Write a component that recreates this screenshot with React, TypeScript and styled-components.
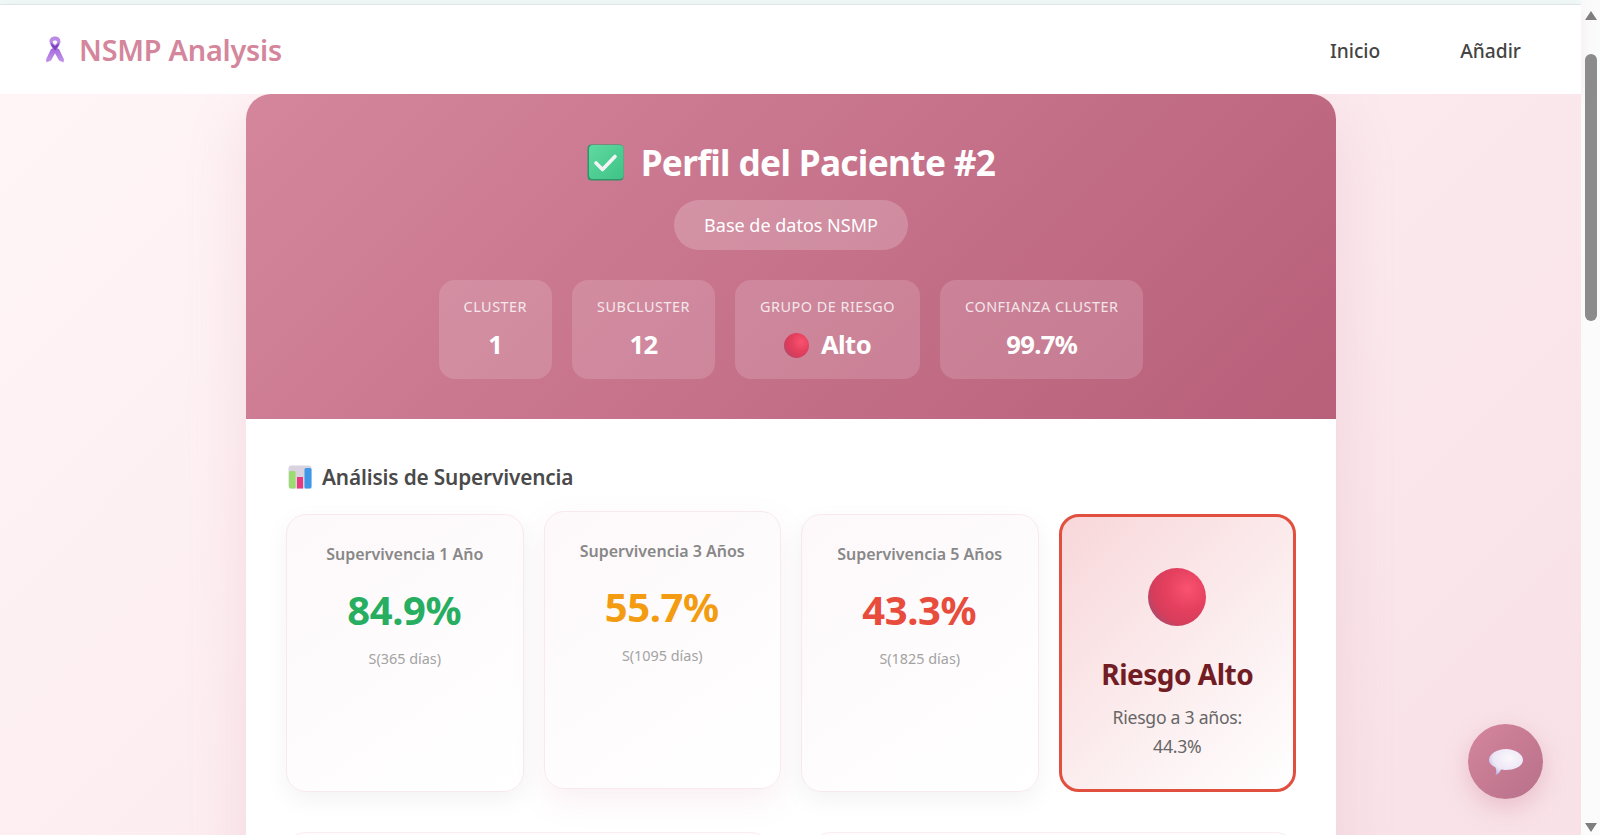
import React from 'react'
import styled, { createGlobalStyle } from 'styled-components'

const GlobalStyle = createGlobalStyle`
  html, body {
    margin: 0;
    padding: 0;
    height: 100%;
    overflow: hidden;
    background: #fff;
    font-family: 'Noto Sans', 'Open Sans', sans-serif;
  }
  * {
    box-sizing: border-box;
  }
`

const Screen = styled.div`
  display: flex;
  width: 100%;
  height: 835px;
  overflow: hidden;
`

const Viewport = styled.div`
  flex: 1;
  min-width: 0;
  display: flex;
  flex-direction: column;
  position: relative;
`

const TopStrip = styled.div`
  height: 5px;
  flex: none;
  background: #effaf7;
  border-bottom: 1px solid #dfeaea;
`

const Nav = styled.nav`
  flex: none;
  height: 89px;
  padding: 2px 60px 0 46px;
  display: flex;
  align-items: center;
  justify-content: space-between;
  background: #fff;
  box-shadow: 0 2px 16px rgba(212, 134, 156, 0.12);
`

const Brand = styled.div`
  display: flex;
  align-items: center;
  gap: 15px;
  margin-bottom: 2px;
  color: #d4869c;
  font-size: 28.8px;
  font-weight: 600;
  letter-spacing: -0.2px;
`

const NavLinks = styled.div`
  display: flex;
  gap: 80px;
`

const NavLink = styled.a`
  color: #444;
  font-size: 19.2px;
  font-weight: 500;
`

const Main = styled.main`
  flex: 1;
  min-height: 0;
  overflow: hidden;
  padding-left: 1px;
  background: linear-gradient(135deg, #fff5f7 0%, #f8e1e7 100%);
`

const Sheet = styled.div`
  width: 1090px;
  margin: 0 auto;
  background: #fff;
  border-radius: 25px 25px 0 0;
  box-shadow: 0 20px 60px rgba(212, 134, 156, 0.2);
`

const Hero = styled.header`
  height: 325px;
  padding-top: 46px;
  border-radius: 25px 25px 0 0;
  background: linear-gradient(135deg, #d4869c 0%, #b85f7a 100%);
  color: #fff;
  display: flex;
  flex-direction: column;
  align-items: center;
`

const Title = styled.h1`
  margin: 0;
  display: flex;
  align-items: center;
  gap: 17px;
  font-size: 35.2px;
  line-height: 44px;
  font-weight: 700;
  letter-spacing: -0.65px;
`

const SourcePill = styled.div`
  margin-top: 16px;
  padding: 0 30px;
  height: 50px;
  display: flex;
  align-items: center;
  border-radius: 25px;
  background: rgba(255, 255, 255, 0.2);
  font-size: 18px;
`

const StatRow = styled.div`
  margin-top: 30px;
  display: flex;
  gap: 20px;
`

const StatTile = styled.div`
  height: 99px;
  padding: 17px 25px 0;
  border-radius: 16px;
  background: rgba(255, 255, 255, 0.15);
  text-align: center;
`

const StatLabel = styled.div`
  font-size: 14.4px;
  line-height: 20px;
  letter-spacing: 0.52px;
  text-transform: uppercase;
  opacity: 0.8;
`

const StatValue = styled.div`
  margin-top: 10px;
  display: flex;
  align-items: center;
  justify-content: center;
  gap: 12px;
  font-size: 25.6px;
  line-height: 36px;
  font-weight: 700;
  letter-spacing: -0.6px;
`

const Body = styled.section`
  padding: 40px 40px 0;
`

const SectionTitle = styled.h2`
  margin: 0 0 20px;
  padding-left: 2px;
  display: flex;
  align-items: center;
  gap: 10px;
  height: 35px;
  color: #4a4a4a;
  font-size: 20.8px;
  font-weight: 600;
  letter-spacing: -0.15px;
`

const CardGrid = styled.div`
  display: grid;
  grid-template-columns: repeat(4, 1fr);
  gap: 20px;
`

const SurvivalCard = styled.div<{ $lifted?: boolean }>`
  height: 278px;
  padding: 28px 16px 0;
  border-radius: 20px;
  border: 1px solid #f8e9ed;
  background: linear-gradient(145deg, #fdf8fa 0%, #ffffff 100%);
  box-shadow: ${(p) =>
    p.$lifted ? '0 12px 30px rgba(212, 134, 156, 0.12)' : '0 8px 25px rgba(0, 0, 0, 0.05)'};
  transform: ${(p) => (p.$lifted ? 'translateY(-3px)' : 'none')};
  text-align: center;
`

const CardLabel = styled.div`
  color: #888;
  font-size: 16px;
  line-height: 22px;
  font-weight: 600;
`

const CardValue = styled.div<{ $color: string }>`
  margin-top: 17px;
  padding-right: 1px;
  color: ${(p) => p.$color};
  font-size: 40px;
  line-height: 56px;
  font-weight: 700;
  letter-spacing: -0.4px;
`

const CardNote = styled.div`
  margin-top: 11px;
  color: #a3a3a3;
  font-size: 14.4px;
  line-height: 20px;
`

const RiskCard = styled.div`
  height: 278px;
  padding-top: 51px;
  border-radius: 20px;
  border: 3px solid #e14f3f;
  background: linear-gradient(135deg, #f8d7da 0%, #ffffff 100%);
  display: flex;
  flex-direction: column;
  align-items: center;
  text-align: center;
`

const RiskTitle = styled.div`
  margin-top: 28px;
  color: #721c24;
  font-size: 28px;
  line-height: 40px;
  font-weight: 700;
  letter-spacing: -0.5px;
`

const RiskNote = styled.div`
  margin-top: 9px;
  color: #666;
  font-size: 17.6px;
  line-height: 29px;
  letter-spacing: -0.25px;
`

const LowerGrid = styled.div`
  margin-top: 40px;
  display: grid;
  grid-template-columns: 1fr 1fr;
  gap: 40px;
`

const LowerCard = styled.div`
  height: 300px;
  border-radius: 20px;
  border: 1px solid #f8eef1;
  background: #fffcfd;
`

const ChatButton = styled.button`
  position: absolute;
  left: 1468px;
  top: 724px;
  width: 75px;
  height: 75px;
  padding: 0;
  border: none;
  border-radius: 50%;
  background: linear-gradient(135deg, #d4869c 0%, #b8708a 100%);
  box-shadow: 0 8px 25px rgba(212, 134, 156, 0.4);
  display: flex;
  align-items: center;
  justify-content: center;
`

const Scrollbar = styled.div`
  flex: none;
  width: 19px;
  height: 100%;
  padding: 11px 3px 3px 0;
  background: #fbfbfb;
  display: flex;
  flex-direction: column;
  align-items: flex-end;
`

const ScrollThumb = styled.div`
  width: 12px;
  height: 267px;
  margin-top: 34px;
  border-radius: 6px;
  background: #8c8c8c;
`

const ScrollSpacer = styled.div`
  flex: 1;
`

const ScrollArrow = styled.div<{ $down?: boolean }>`
  width: 0;
  height: 0;
  border-left: 6px solid transparent;
  border-right: 6px solid transparent;
  ${(p) => (p.$down ? 'border-top: 9px solid #7f7f7f;' : 'border-bottom: 9px solid #7f7f7f;')}
`

const RibbonIcon = () => (
  <svg width="18" height="27" viewBox="1 0 18 27">
    <defs>
      <linearGradient id="ribbonTail" x1="0" y1="0" x2="0" y2="1">
        <stop offset="0" stopColor="#a468de" />
        <stop offset="1" stopColor="#c596ea" />
      </linearGradient>
    </defs>
    <path d="M6 13 L1 23.5 L1.5 26.5 L6 24.5 L13 12 Z" fill="url(#ribbonTail)" />
    <path d="M14 13 L19 23.5 L18.5 26.5 L14 24.5 L7 12 Z" fill="url(#ribbonTail)" />
    <path
      d="M10 0.5 C6.5 0.5 4.5 2.8 4.5 5.5 C4.5 8 6.5 10 7.5 12 L10 9.5 L12.5 12 C13.5 10 15.5 8 15.5 5.5 C15.5 2.8 13.5 0.5 10 0.5 Z M10 4.5 C11.5 4.5 12.2 5.2 12.2 6 C12.2 7 11 8 10 8.8 C9 8 7.8 7 7.8 6 C7.8 5.2 8.5 4.5 10 4.5 Z"
      fill="#b98ae6"
      fillRule="evenodd"
    />
    <path d="M6 6.5 C7 8 8.5 9 10 10 C11.5 9 13 8 14 6.5 L13.5 10 L10 14.5 L6.5 10 Z" fill="#7f42bf" />
  </svg>
)

const CheckIcon = () => (
  <svg width="37" height="37" viewBox="0 0 37 37">
    <defs>
      <linearGradient id="checkFill" x1="0" y1="0" x2="1" y2="1">
        <stop offset="0" stopColor="#5fd9a0" />
        <stop offset="1" stopColor="#3fc386" />
      </linearGradient>
    </defs>
    <rect x="0.5" y="0.5" width="36" height="36" rx="4" fill="#2f9468" />
    <rect x="2" y="1" width="34.5" height="34" rx="4" fill="url(#checkFill)" />
    <path
      d="M9 19 L15.5 25.5 L28 12.5"
      fill="none"
      stroke="#f4f4f6"
      strokeWidth="3.6"
      strokeLinecap="round"
      strokeLinejoin="round"
    />
  </svg>
)

const ChartIcon = () => (
  <svg width="24" height="24" viewBox="0 0 24 24">
    <rect x="0.5" y="0.5" width="23" height="23" rx="3" fill="#d8d3de" />
    <rect x="1" y="6" width="6.5" height="17.5" rx="1.5" fill="#9bdc6e" />
    <rect x="9" y="12" width="6" height="11.5" fill="#e8397f" />
    <rect x="16.5" y="3" width="7" height="20.5" rx="1.5" fill="#3f97e8" />
  </svg>
)

const Ball = ({ size }: { size: number }) => (
  <svg width={size} height={size} viewBox="0 0 60 60">
    <defs>
      <radialGradient id="ballFill" cx="0.68" cy="0.36" r="0.74">
        <stop offset="0" stopColor="#fa5271" />
        <stop offset="0.5" stopColor="#e4405e" />
        <stop offset="0.82" stopColor="#d63d5b" />
        <stop offset="1" stopColor="#ad4a6c" />
      </radialGradient>
    </defs>
    <circle cx="30" cy="30" r="30" fill="url(#ballFill)" />
  </svg>
)

const BubbleIcon = () => (
  <svg width="36" height="30" viewBox="0 0 36 30">
    <defs>
      <radialGradient id="bubbleFill" cx="0.6" cy="0.35" r="0.8">
        <stop offset="0" stopColor="#fbf8fc" />
        <stop offset="0.6" stopColor="#ece6f6" />
        <stop offset="1" stopColor="#a9a4e6" />
      </radialGradient>
    </defs>
    <path
      d="M18 2 C27 2 35 7 35 13 C35 19 27 23 18 23 C16 23 14 22.8 13 22.5 C12 25 10 27.5 7.5 28 C8.5 26 8.5 23 7.5 20.5 C3.5 18.5 1 16 1 13 C1 7 9 2 18 2 Z"
      fill="url(#bubbleFill)"
    />
  </svg>
)

const stats = [
  { label: 'Cluster', value: '1' },
  { label: 'Subcluster', value: '12' },
  { label: 'Grupo de riesgo', value: 'Alto', ball: true },
  { label: 'Confianza cluster', value: '99.7%' },
]

const survival = [
  { label: 'Supervivencia 1 Año', value: '84.9%', note: 'S(365 días)', color: '#27ae60' },
  { label: 'Supervivencia 3 Años', value: '55.7%', note: 'S(1095 días)', color: '#f39c12', lifted: true },
  { label: 'Supervivencia 5 Años', value: '43.3%', note: 'S(1825 días)', color: '#e74c3c' },
]

export default function App() {
  return (
    <Screen>
      <GlobalStyle />
      <Viewport>
        <TopStrip />
        <Nav>
          <Brand>
            <RibbonIcon />
            NSMP Analysis
          </Brand>
          <NavLinks>
            <NavLink>Inicio</NavLink>
            <NavLink>Añadir</NavLink>
          </NavLinks>
        </Nav>
        <Main>
          <Sheet>
            <Hero>
              <Title>
                <CheckIcon />
                Perfil del Paciente #2
              </Title>
              <SourcePill>Base de datos NSMP</SourcePill>
              <StatRow>
                {stats.map((s) => (
                  <StatTile key={s.label}>
                    <StatLabel>{s.label}</StatLabel>
                    <StatValue>
                      {s.ball && <Ball size={25} />}
                      {s.value}
                    </StatValue>
                  </StatTile>
                ))}
              </StatRow>
            </Hero>
            <Body>
              <SectionTitle>
                <ChartIcon />
                Análisis de Supervivencia
              </SectionTitle>
              <CardGrid>
                {survival.map((c) => (
                  <SurvivalCard key={c.label} $lifted={c.lifted}>
                    <CardLabel>{c.label}</CardLabel>
                    <CardValue $color={c.color}>{c.value}</CardValue>
                    <CardNote>{c.note}</CardNote>
                  </SurvivalCard>
                ))}
                <RiskCard>
                  <Ball size={58} />
                  <RiskTitle>Riesgo Alto</RiskTitle>
                  <RiskNote>
                    Riesgo a 3 años:
                    <br />
                    44.3%
                  </RiskNote>
                </RiskCard>
              </CardGrid>
              <LowerGrid>
                <LowerCard />
                <LowerCard />
              </LowerGrid>
            </Body>
          </Sheet>
        </Main>
        <ChatButton>
          <BubbleIcon />
        </ChatButton>
      </Viewport>
      <Scrollbar>
        <ScrollArrow />
        <ScrollThumb />
        <ScrollSpacer />
        <ScrollArrow $down />
      </Scrollbar>
    </Screen>
  )
}
